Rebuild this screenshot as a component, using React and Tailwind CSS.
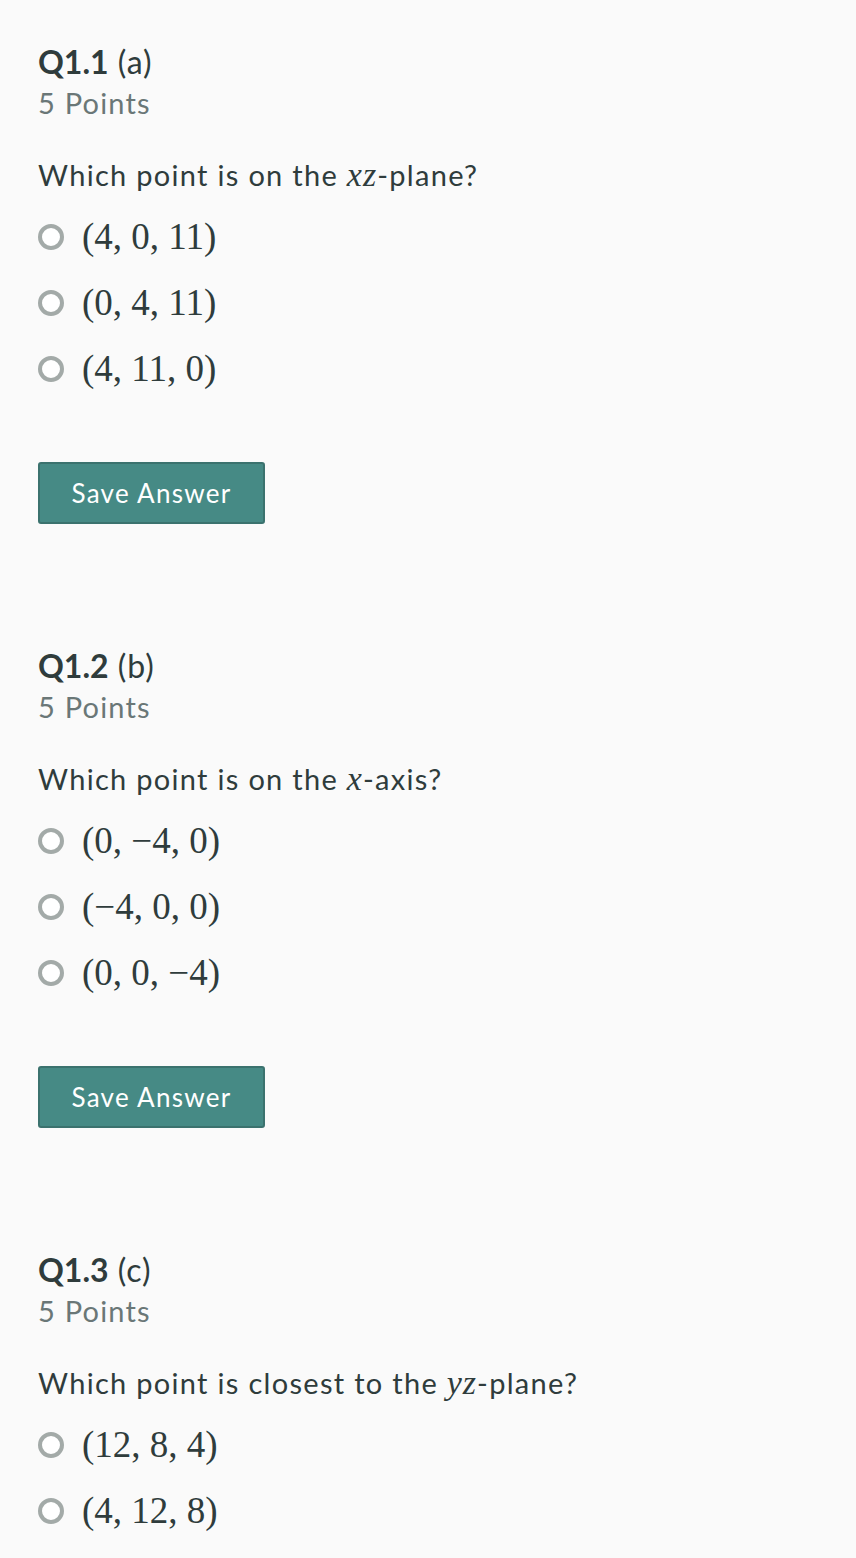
const questions = [
  {
    id: 'Q1.1',
    part: '(a)',
    prompt: ['Which point is on the ', 'xz', '-plane?'],
    options: ['(4, 0, 11)', '(0, 4, 11)', '(4, 11, 0)'],
  },
  {
    id: 'Q1.2',
    part: '(b)',
    prompt: ['Which point is on the ', 'x', '-axis?'],
    options: ['(0, \u22124, 0)', '(\u22124, 0, 0)', '(0, 0, \u22124)'],
  },
  {
    id: 'Q1.3',
    part: '(c)',
    prompt: ['Which point is closest to the ', 'yz', '-plane?'],
    options: ['(12, 8, 4)', '(4, 12, 8)'],
    noButton: true,
  },
]

const sans = { fontFamily: 'Lato, "Open Sans", sans-serif' }
const serif = { fontFamily: '"Liberation Serif", "DejaVu Serif", serif' }

function Radio() {
  return <span className="h-[26px] w-[26px] shrink-0 rounded-full border-[4px] border-[#a3aaa8] bg-white" />
}

function Question({ q }) {
  return (
    <section className="pt-[42px] pb-[80px]">
      <h2 className="text-[32px] leading-[40px] tracking-[1px] text-[#2f3c3c]">
        <span className="font-bold tracking-[0px]">{q.id}</span> <span>{q.part}</span>
      </h2>
      <div className="mt-[3px] text-[29px] leading-[36px] tracking-[1.2px] text-[#6a7777]">5 Points</div>
      <p className="mt-[34px] text-[29px] leading-[40px] tracking-[1.3px] text-[#2f3c3c]">
        {q.prompt[0]}
        <span className="italic text-[34px] tracking-[1px]" style={serif}>{q.prompt[1]}</span>
        {q.prompt[2]}
      </p>
      <div className="mt-[9px] flex flex-col">
        {q.options.map((opt) => (
          <label key={opt} className="flex h-[66px] items-center gap-[18px]">
            <Radio />
            <span className="text-[37px] leading-[44px] text-[#2f3c3c]" style={serif}>{opt}</span>
          </label>
        ))}
      </div>
      {!q.noButton && (
        <button className="mt-[60px] h-[62px] w-[227px] rounded-[3px] border-2 border-[#3b726e] bg-[#468a85] text-[26px] tracking-[1.3px] text-white">
          Save Answer
        </button>
      )}
    </section>
  )
}

export default function App() {
  return (
    <div className="h-[1558px] overflow-hidden bg-[#fafafa] px-[38px]" style={sans}>
      {questions.map((q) => (
        <Question key={q.id} q={q} />
      ))}
    </div>
  )
}
